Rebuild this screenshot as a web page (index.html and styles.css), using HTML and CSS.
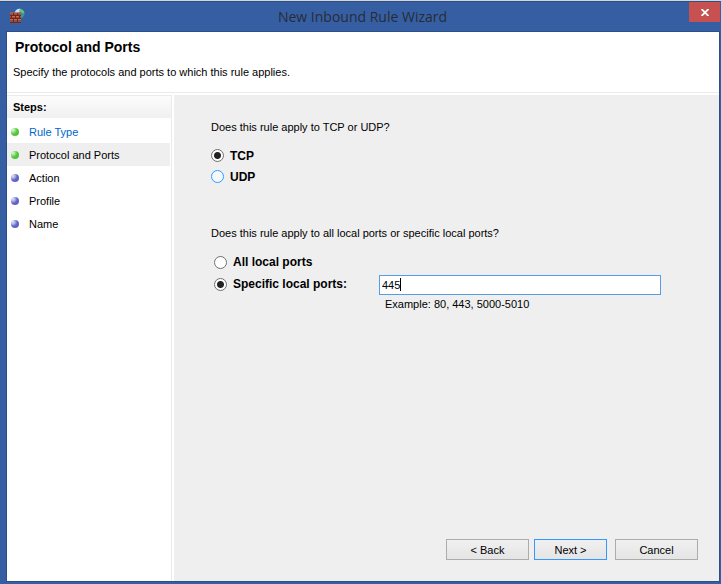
FILE: index.html
```html
<!DOCTYPE html>
<html lang="en">
<head>
    <meta charset="UTF-8">
    <meta name="viewport" content="width=device-width, initial-scale=1.0">
    <title>New Inbound Rule Wizard</title>
    <link rel="stylesheet" href="styles.css">
</head>
<body>
    <div class="title-bar">
        <svg class="app-icon" width="16" height="16" viewBox="0 0 16 16" aria-hidden="true">
            <circle cx="10.500" cy="5.500" r="5" fill="#2f86dc"/>
            <path d="M5.500 5 Q7 .8 11 .8 L10.500 4 L8 6 L5.500 6 Z" fill="#c4e4f5"/>
            <path d="M11 .8 Q15 2 15.400 5.500 L13 5 L10.500 3 Z" fill="#6cc85a"/>
            <path d="M12 7 L15 6.500 Q14.500 9 12 10 Z" fill="#35a852"/>
            <rect x="1" y="4.500" width="11" height="10.500" fill="#a04a38"/>
            <path d="M1 7.500 H12 M1 10.500 H12 M1 14.500 H12 M4.500 5 V7 M8.500 5 V7 M2.500 8 V10 M6.500 8 V10 M10.500 8 V10 M4.500 11 V14 M8.500 11 V14" stroke="#6a2a22" stroke-width="1"/>
            <path d="M1 5 H4 M5 5 H8 M9 5 H12 M3 8.500 H6 M7 8.500 H10 M1 11.500 H4 M5 11.500 H8 M9 11.500 H12" stroke="#c26a54" stroke-width="1"/>
        </svg>
        <h1 class="window-title">New Inbound Rule Wizard</h1>
        <button class="close-button" type="button" aria-label="Close">
            <svg width="8" height="7" viewBox="0 0 8 7" aria-hidden="true">
                <path d="M.5 0 L7.500 7 M7.500 0 L.5 7" stroke="#fff" stroke-width="1.800"/>
            </svg>
        </button>
    </div>
    <form class="window">
        <header class="page-header">
            <h2>Protocol and Ports</h2>
            <p>Specify the protocols and ports to which this rule applies.</p>
        </header>
        <div class="wizard">
            <nav class="steps">
                <h3>Steps:</h3>
                <ul>
                    <li><span class="dot done"></span><a href="#">Rule Type</a></li>
                    <li class="current"><span class="dot done"></span>Protocol and Ports</li>
                    <li><span class="dot"></span>Action</li>
                    <li><span class="dot"></span>Profile</li>
                    <li><span class="dot"></span>Name</li>
                </ul>
            </nav>
            <main>
                <p class="question">Does this rule apply to TCP or UDP?</p>
                <div class="options">
                    <label class="option"><input type="radio" name="protocol" checked>TCP</label>
                    <label class="option"><input class="hot" type="radio" name="protocol">UDP</label>
                </div>
                <p class="question ports-question">Does this rule apply to all local ports or specific local ports?</p>
                <div class="options port-options">
                    <label class="option"><input type="radio" name="ports">All local ports</label>
                    <label class="option"><input type="radio" name="ports" checked>Specific local ports:</label>
                    <div class="port-field">
                        <input class="port-input" type="text" value="445" aria-label="Specific local ports">
                        <span class="caret"></span>
                    </div>
                    <p class="example">Example: 80, 443, 5000-5010</p>
                </div>
                <div class="buttons">
                    <div class="step-buttons">
                        <button class="button" type="button">&lt; Back</button>
                        <button class="button next" type="button">Next &gt;</button>
                    </div>
                    <button class="button" type="button">Cancel</button>
                </div>
            </main>
        </div>
    </form>
</body>
</html>
```
FILE: styles.css
```css
* {
    box-sizing: border-box;
}
body {
    margin: 0;
    min-height: 100vh;
    display: flex;
    flex-direction: column;
    padding: 0 1px 2px 6px;
    border-top: 1px solid #d5d5d3;
    background-color: #365fa3;
    color: #000;
    font-family: "Liberation Sans", Arial, sans-serif;
    font-size: 11px;
}
h1, h2, h3, p, ul {
    margin: 0;
    padding: 0;
}
.title-bar {
    display: grid;
    grid-template-columns: 32px 1fr 31px;
    height: 30px;
    margin-left: -6px;
    border-top: 1px solid #2b4f8b;
}
.app-icon {
    margin: 6px 0 0 9px;
}
.window-title {
    padding-left: 4px;
    font-family: "Open Sans", "Segoe UI", sans-serif;
    font-size: 14px;
    font-weight: normal;
    line-height: 29px;
    text-align: center;
    color: #262c36;
}
.close-button {
    display: flex;
    align-items: center;
    justify-content: center;
    height: 20px;
    padding: 0;
    border: none;
    background-color: #c75050;
}
.window {
    flex: 1;
    display: flex;
    flex-direction: column;
    border: 1px solid #2b4f8b;
    background-color: #fff;
}
.page-header {
    height: 61px;
    padding: 5px 6px;
    border-bottom: 1px solid #ebebeb;
}
.page-header h2 {
    padding-left: 2px;
    font-size: 14px;
    line-height: 20px;
}
.page-header p {
    margin-top: 8px;
    line-height: 14px;
}
.wizard {
    flex: 1;
    display: grid;
    grid-template-columns: 165px 1fr;
    column-gap: 2px;
    padding-top: 2px;
}
.steps {
    border-right: 1px solid #ebebeb;
}
.steps h3 {
    height: 23px;
    padding-left: 6px;
    border-top: 1px solid #ebebeb;
    background: linear-gradient(#fcfcfc, #f0f0f0);
    font-size: 11px;
    line-height: 22px;
}
.steps ul {
    padding: 2px 1px 0 0;
    list-style: none;
}
.steps li {
    display: flex;
    align-items: center;
    gap: 10px;
    height: 23px;
    padding-left: 4px;
}
.steps a {
    color: #0066cc;
    text-decoration: none;
}
.current {
    background-color: #efefef;
}
.dot {
    width: 8px;
    height: 8px;
    border-radius: 50%;
    background: radial-gradient(circle at 25% 25%, #e4e4fa 0, #a5b0e2 25%, #6464c8 50%, #5c5cc0 100%);
}
.dot.done {
    background: radial-gradient(circle at 25% 25%, #e4fae0 0, #9ade8c 25%, #55c83a 50%, #50bc38 100%);
}
main {
    display: flex;
    flex-direction: column;
    padding: 22px 21px 21px 37px;
    background-color: #efefef;
}
.question {
    line-height: 20px;
}
.ports-question {
    margin-top: 36px;
}
.options {
    margin-top: 8px;
}
.option {
    display: flex;
    align-items: center;
    gap: 6px;
    height: 21px;
    font-size: 12px;
    font-weight: bold;
}
.option input {
    appearance: none;
    width: 13px;
    height: 13px;
    margin: 0;
    border: 1px solid #707070;
    border-radius: 50%;
    background-color: #fff;
}
.option input:checked {
    background-image: radial-gradient(circle, #222 3px, transparent 4px);
}
.option .hot {
    border-color: #3399ff;
    background-color: #f3f9ff;
}
.port-options {
    display: grid;
    grid-template-columns: 165px 1fr;
    grid-template-rows: 22px 22px auto;
    align-items: center;
    padding: 0 37px 0 3px;
}
.port-options .option:first-child {
    grid-column: 1 / 3;
}
.port-field {
    position: relative;
    padding-top: 2px;
}
.port-input {
    display: block;
    width: 100%;
    height: 20px;
    padding: 0 2px;
    border: 1px solid #569de5;
    outline: none;
    background-color: #fff;
    font-family: inherit;
    font-size: 11px;
}
.caret {
    position: absolute;
    top: 5px;
    left: 21px;
    width: 1px;
    height: 13px;
    background-color: #000;
}
.example {
    grid-column: 2;
    padding-left: 6px;
    line-height: 18px;
}
.buttons {
    display: flex;
    justify-content: flex-end;
    gap: 8px;
    margin-top: auto;
}
.step-buttons {
    display: flex;
    gap: 5px;
}
.button {
    width: 83px;
    height: 21px;
    padding: 0;
    border: 1px solid #acacac;
    background: linear-gradient(#f0f0f0, #e5e5e5);
    color: #000;
    font-family: inherit;
    font-size: 11px;
}
.button.next {
    width: 73px;
    border: 1px solid #3399ff;
}
```
